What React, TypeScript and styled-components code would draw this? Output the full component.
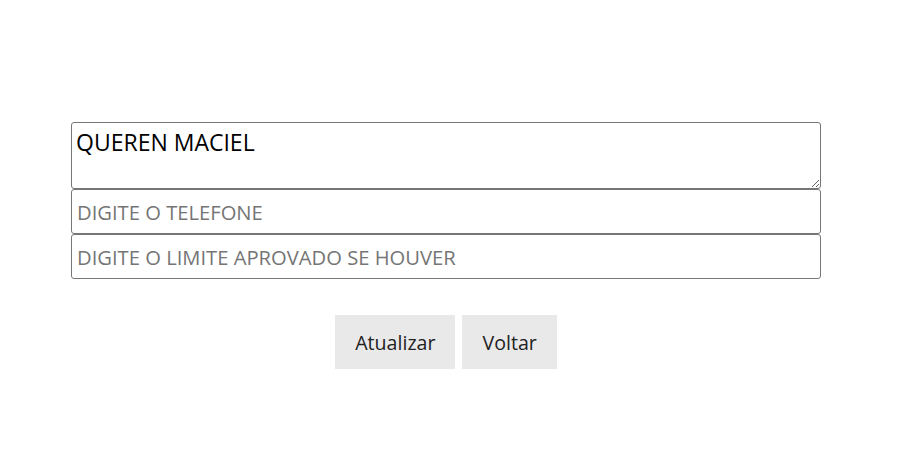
import React from "react";
import styled, { createGlobalStyle } from "styled-components";

const Global = createGlobalStyle`
  body { margin: 0; background: #fff; font-family: "Open Sans", "Noto Sans", sans-serif; }
`;

const Page = styled.div`
  width: 892px;
  padding-top: 122px;
  display: flex;
  flex-direction: column;
  align-items: center;
`;

const Form = styled.form`
  width: 750px;
  display: flex;
  flex-direction: column;
`;

const NameArea = styled.textarea`
  box-sizing: border-box;
  width: 750px;
  height: 67px;
  margin: 0;
  border: 1px solid #767676;
  border-radius: 3px;
  font-family: "Open Sans", "Noto Sans", sans-serif;
  font-size: 23px;
  line-height: 1.35;
  color: #000;
  padding: 4px 4px 2px;
`;

const Field = styled.input`
  box-sizing: border-box;
  width: 750px;
  height: 45px;
  margin: 0;
  border: 1px solid #767676;
  border-radius: 3px;
  font-family: "Open Sans", "Noto Sans", sans-serif;
  font-size: 20.2px;
  padding: 0 5px;
  &::placeholder { color: #757575; }
`;

const Actions = styled.div`
  display: flex;
  gap: 7px;
  margin-top: 36px;
`;

const Button = styled.button`
  border: none;
  background: #e9e9e9;
  height: 54px;
  padding: 0 20px;
  font-family: "Open Sans", "Noto Sans", sans-serif;
  font-size: 19.6px;
  color: #222;
`;

export default function App() {
  return (
    <>
      <Global />
      <Page>
        <Form onSubmit={(e) => e.preventDefault()}>
          <NameArea defaultValue="QUEREN MACIEL" />
          <Field placeholder="DIGITE O TELEFONE" />
          <Field placeholder="DIGITE O LIMITE APROVADO SE HOUVER" />
        </Form>
        <Actions>
          <Button>Atualizar</Button>
          <Button>Voltar</Button>
        </Actions>
      </Page>
    </>
  );
}
